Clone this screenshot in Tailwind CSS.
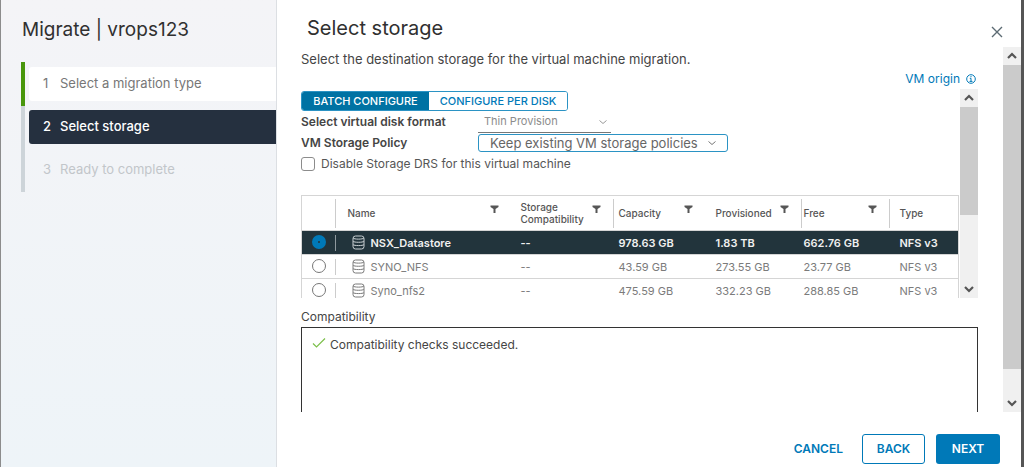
<!DOCTYPE html>
<html lang="en">

<head>
    <meta charset="UTF-8">
    <meta name="viewport" content="width=device-width, initial-scale=1.0">
    <script src="https://cdn.jsdelivr.net/npm/@tailwindcss/browser@4"></script>
    <title>Migrate | vrops123</title>
</head>

<body class="flex h-screen overflow-hidden bg-white font-['Inter','Open_Sans',sans-serif] text-xs text-[#454545]">
    <svg class="hidden">
        <symbol id="filter" viewBox="0 0 9 8">
            <path d="M0.500 0.500h8v1.500L5.500 4V8H3.500V4L0.500 2z" fill="currentColor" />
        </symbol>
        <symbol id="datastore" viewBox="0 0 13 15">
            <g fill="none" stroke="currentColor">
                <rect x="1" y="1" width="11" height="13" rx="2.500" />
                <path d="M1 3c1 1.500 10 1.500 11 0M1 6.300c1 1.300 10 1.300 11 0M1 9.600c1 1.300 10 1.300 11 0" />
            </g>
        </symbol>
        <symbol id="up" viewBox="0 0 10 8">
            <path d="M1 6l4-4 4 4" fill="none" stroke="currentColor" stroke-width="2.200" />
        </symbol>
        <symbol id="down" viewBox="0 0 10 8">
            <path d="M1 2l4 4 4-4" fill="none" stroke="currentColor" stroke-width="2.200" />
        </symbol>
        <symbol id="caret" viewBox="0 0 8 6">
            <path d="M.5 1.500L4 4.500l3.500-3" fill="none" stroke="currentColor" />
        </symbol>
    </svg>

    <!-- wizard steps -->
    <aside class="w-[277px] shrink-0 border-x border-l-[#8c8c8c] border-r-[#dcdfe3] bg-linear-to-b from-[#f4f4f7] to-[#eef4f8] pl-5">
        <h1 class="pt-4 pl-px text-[19px] leading-7 text-[#303030]">Migrate | vrops123</h1>
        <ol class="mt-[18px] border-l-4 border-[#cdd4d9] text-[13px]">
            <li class="-ml-1 border-l-4 border-[#48960c] py-[5px] pl-1">
                <a href="#" class="flex h-[34px] items-center gap-2 rounded-l-[3px] bg-white pl-3.5 text-[#777]"><span class="w-[9px]">1</span>Select a migration type</a>
            </li>
            <li class="py-1 pl-1">
                <a href="#" class="flex h-[34px] items-center gap-2 rounded-l-[3px] bg-[#25303f] pl-3.5 font-medium text-white"><span class="w-[9px]">2</span>Select storage</a>
            </li>
            <li class="py-1 pl-1">
                <span class="flex h-9 items-center gap-2 pl-3.5 text-[#c2c6ca]"><span class="w-[9px]">3</span>Ready to complete</span>
            </li>
        </ol>
    </aside>

    <main class="flex min-w-0 flex-1 flex-col">
        <header class="flex h-[47px] shrink-0 items-center justify-between pr-[18px] pl-[30px] pt-2">
            <h2 class="text-xl leading-7 text-[#303030]">Select storage</h2>
            <button aria-label="Close" class="pt-2 text-[#5c6b73]">
                <svg class="size-3" viewBox="0 0 12 12"><path d="M1 1l10 10M11 1L1 11" stroke="currentColor" stroke-width="1.400" /></svg>
            </button>
        </header>

        <div class="flex min-h-0 flex-1">
            <section class="flex min-w-0 flex-1 flex-col overflow-hidden pr-[25px] pl-6">
                <p class="shrink-0 pt-0.5 text-[13px] leading-5">Select the destination storage for the virtual machine migration.</p>
                <a href="#" class="flex h-5 shrink-0 items-center justify-end gap-1.5 pr-0.5 text-[#0079b8]">VM origin
                    <svg class="size-2.5" viewBox="0 0 10 10" fill="none" stroke="currentColor"><circle cx="5" cy="5" r="4.300" /><path d="M3.800 4.300H5v3M3.500 7.400h3M4.400 2.700h1.200" /></svg>
                </a>

                <div class="flex h-[209px] shrink-0">
                    <div class="min-w-0 flex-1 overflow-hidden pt-0.5">
                        <div class="flex h-5 w-[267px] overflow-hidden rounded-[3px] border border-[#2b93c4] text-[11px] font-medium">
                            <button class="w-[127px] bg-[#0072a3] text-white">BATCH CONFIGURE</button>
                            <button class="flex-1 bg-white text-[#0079b8]">CONFIGURE PER DISK</button>
                        </div>
                        <div class="flex h-[22px] items-center">
                            <label for="format" class="w-[177px] font-semibold">Select virtual disk format</label>
                            <div class="relative w-[133px]">
                                <select id="format" class="h-[22px] w-full appearance-none border-b border-[#777] pl-1.5 text-[11px] text-[#8c8c8c]">
                                    <option>Thin Provision</option>
                                </select>
                                <svg class="pointer-events-none absolute top-2 right-1 h-1.5 w-2 text-[#9a9a9a]"><use href="#caret" /></svg>
                            </div>
                        </div>
                        <div class="flex h-5 items-center">
                            <label for="policy" class="w-[177px] font-semibold">VM Storage Policy</label>
                            <div class="relative w-[250px]">
                                <select id="policy" class="block h-[18px] w-full appearance-none rounded-[3px] border border-[#2b93c4] pl-[11px] text-[13px] leading-4 text-[#666]">
                                    <option>Keep existing VM storage policies</option>
                                </select>
                                <svg class="pointer-events-none absolute top-1.5 right-3 h-1.5 w-2 text-[#777]"><use href="#caret" /></svg>
                            </div>
                        </div>
                        <label class="flex h-[22px] items-center gap-1.5 text-[#565656]">
                            <input type="checkbox" class="size-3.5 appearance-none rounded-[3px] border border-[#8c8c8c] bg-white checked:bg-[#0079b8]">
                            Disable Storage DRS for this virtual machine
                        </label>

                        <table class="mt-5 w-full table-fixed border-collapse border border-[#d5d5d5] text-left text-[11px] leading-4 text-[#7b7b7b]">
                            <colgroup>
                                <col class="w-[34px]">
                                <col>
                                <col class="w-[103px]">
                                <col class="w-[97px]">
                                <col class="w-[91px]">
                                <col class="w-[88px]">
                                <col class="w-[69px]">
                            </colgroup>
                            <thead class="text-[10px] leading-3 text-[#565656]">
                                <tr class="h-[35px] *:p-0 *:font-medium">
                                    <th><div class="h-[29px] border-r border-[#ccc]"></div></th>
                                    <th><div class="flex items-center justify-between px-3">Name<button aria-label="Filter name" class="pb-2"><svg class="h-2 w-[9px]"><use href="#filter" /></svg></button></div></th>
                                    <th><div class="flex h-[29px] items-center justify-between border-r border-[#ccc] pr-3 pl-2.5">Storage Compatibility<button aria-label="Filter storage compatibility" class="-ml-3 pb-2"><svg class="h-2 w-[9px]"><use href="#filter" /></svg></button></div></th>
                                    <th><div class="flex items-center justify-between pr-[18px] pl-[5px]">Capacity<button aria-label="Filter capacity" class="pb-2"><svg class="h-2 w-[9px]"><use href="#filter" /></svg></button></div></th>
                                    <th><div class="flex h-[29px] items-center justify-between border-r border-[#ccc] pr-3 pl-[5px]">Provisioned<button aria-label="Filter provisioned" class="pb-2"><svg class="h-2 w-[9px]"><use href="#filter" /></svg></button></div></th>
                                    <th><div class="flex h-[29px] items-center justify-between border-r border-[#ccc] pr-3 pl-0.5">Free<button aria-label="Filter free" class="pb-2"><svg class="h-2 w-[9px]"><use href="#filter" /></svg></button></div></th>
                                    <th class="pl-2.5!">Type</th>
                                </tr>
                            </thead>
                            <tbody>
                                <tr class="h-6 border-t border-[#d5d5d5] bg-[#22343c] font-semibold text-[#f0f0f0] *:p-0">
                                    <td><div class="flex h-4 items-start border-r border-[#8f999e] pl-2.5"><input type="radio" name="ds" checked aria-label="NSX_Datastore" class="size-3.5 appearance-none rounded-full border-[6px] border-[#0079b8] bg-[#22343c]"></div></td>
                                    <td><div class="flex items-center gap-1.5 pl-4"><svg class="h-[15px] w-[13px] text-[#c9cfd2]"><use href="#datastore" /></svg>NSX_Datastore</div></td>
                                    <td class="pl-2.5!">--</td>
                                    <td class="pl-[5px]!">978.63 GB</td>
                                    <td class="pl-[5px]!">1.83 TB</td>
                                    <td class="pl-0.5!">662.76 GB</td>
                                    <td class="pl-2.5!">NFS v3</td>
                                </tr>
                                <tr class="h-6 border-t border-[#d5d5d5] *:p-0">
                                    <td><div class="flex h-4 items-start border-r border-[#ccc] pl-2.5"><input type="radio" name="ds" aria-label="SYNO_NFS" class="size-3.5 appearance-none rounded-full border border-[#777] bg-white"></div></td>
                                    <td><div class="flex items-center gap-1.5 pl-4"><svg class="h-[15px] w-[13px]"><use href="#datastore" /></svg>SYNO_NFS</div></td>
                                    <td class="pl-2.5!">--</td>
                                    <td class="pl-[5px]!">43.59 GB</td>
                                    <td class="pl-[5px]!">273.55 GB</td>
                                    <td class="pl-0.5!">23.77 GB</td>
                                    <td class="pl-2.5!">NFS v3</td>
                                </tr>
                                <tr class="h-6 border-t border-[#d5d5d5] *:p-0">
                                    <td><div class="flex h-4 items-start border-r border-[#ccc] pl-2.5"><input type="radio" name="ds" aria-label="Syno_nfs2" class="size-3.5 appearance-none rounded-full border border-[#777] bg-white"></div></td>
                                    <td><div class="flex items-center gap-1.5 pl-4"><svg class="h-[15px] w-[13px]"><use href="#datastore" /></svg>Syno_nfs2</div></td>
                                    <td class="pl-2.5!">--</td>
                                    <td class="pl-[5px]!">475.59 GB</td>
                                    <td class="pl-[5px]!">332.23 GB</td>
                                    <td class="pl-0.5!">288.85 GB</td>
                                    <td class="pl-2.5!">NFS v3</td>
                                </tr>
                            </tbody>
                        </table>
                    </div>
                    <!-- list scrollbar -->
                    <div class="ml-px flex w-[18px] shrink-0 flex-col bg-[#f0f0f0] text-[#555]">
                        <button aria-label="Scroll up" class="flex h-[18px] items-center justify-center"><svg class="h-2 w-2.5"><use href="#up" /></svg></button>
                        <div class="h-[108px] bg-[#cbcbcb]"></div>
                        <button aria-label="Scroll down" class="mt-auto flex h-[18px] items-center justify-center"><svg class="h-2 w-2.5"><use href="#down" /></svg></button>
                    </div>
                </div>

                <h3 class="shrink-0 pt-[9px] leading-5">Compatibility</h3>
                <div class="flex flex-1 items-start gap-1 border border-b-0 border-[#333] pt-[7px] pl-2.5 leading-5">
                    <svg class="mt-0.5 h-3 w-3.5" viewBox="0 0 14 12"><path d="M1 6.500l3.500 3.500L13 1.500" fill="none" stroke="#7cc04b" stroke-width="1.200" /></svg>
                    Compatibility checks succeeded.
                </div>
            </section>
            <!-- page scrollbar -->
            <div class="flex w-[18px] shrink-0 flex-col bg-[#f0f0f0] text-[#555]">
                <button aria-label="Scroll up" class="flex h-[18px] items-center justify-center"><svg class="h-2 w-2.5"><use href="#up" /></svg></button>
                <div class="flex-1 bg-[#cbcbcb]"></div>
                <button aria-label="Scroll down" class="flex h-[43px] items-end justify-center pb-[5px]"><svg class="h-2 w-2.5"><use href="#down" /></svg></button>
            </div>
        </div>

        <footer class="flex h-[55px] shrink-0 items-center justify-end gap-[11px] pt-[18px] pr-[21px] text-xs font-semibold text-[#0079b8]">
            <button class="h-[30px] px-2">CANCEL</button>
            <button class="h-[30px] w-[63px] rounded-[3px] border border-[#0079b8] bg-white">BACK</button>
            <button class="h-[30px] w-16 rounded-[3px] bg-[#0079b8] text-white">NEXT</button>
        </footer>
    </main>
    <div class="w-[3px] shrink-0 bg-[#555]"></div>
</body>

</html>
